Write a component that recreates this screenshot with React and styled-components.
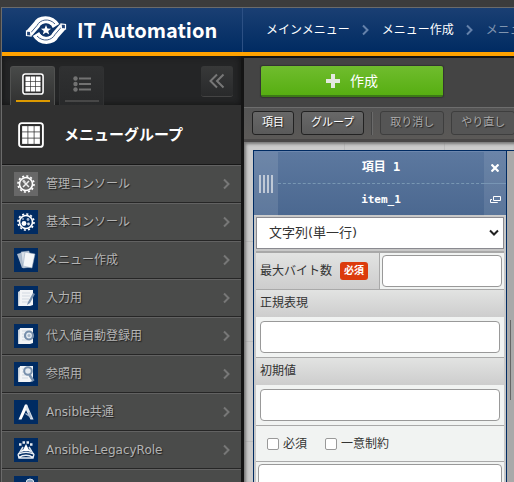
import React from "react";
import styled, { createGlobalStyle, css } from "styled-components";

const GlobalStyle = createGlobalStyle`
  * { box-sizing: border-box; }
  body {
    margin: 0;
    background: #3c3c3c;
    color: #333;
    font: 12px/20px "DejaVu Sans", "Noto Sans CJK JP", sans-serif;
    overflow: hidden;
  }
  button, input, select { font: inherit; margin: 0; }
  svg { display: block; flex: none; }
`;

const Frame = styled.div`
  margin: 7px 0 0 1px;
  height: calc(100vh - 7px);
  border: solid #6b6b6b;
  border-width: 1px 0 0 1px;
  display: flex;
  flex-direction: column;
  overflow: hidden;
`;

const Header = styled.header`
  flex: none;
  height: 48px;
  display: flex;
  background: linear-gradient(#1a3f73, #002b62);
  border-bottom: 4px solid #ffa200;
  color: #fff;
  white-space: nowrap;
`;

const Brand = styled.a`
  flex: none;
  width: 241px;
  padding-left: 22px;
  display: flex;
  align-items: center;
  gap: 9px;
  border-right: 1px solid #2c5084;
  color: #fff;
  text-decoration: none;
  font: 700 20px/40px "Noto Sans CJK JP", sans-serif;
`;

const Breadcrumb = styled.nav`
  display: flex;
  align-items: center;
  gap: 11px;
  padding-left: 23px;
  overflow: hidden;
  color: #6582ab;
`;

const Crumb = styled.a`
  flex: none;
  color: ${(p) => (p.$current ? "#8095b0" : "#fff")};
  text-decoration: none;
`;

const Columns = styled.div`
  flex: 1;
  min-height: 0;
  display: flex;
`;

const Sidebar = styled.aside`
  flex: none;
  width: 242px;
  border-right: 3px solid #141414;
  background: #4a4b4a;
  overflow: hidden;
`;

const TabBar = styled.div`
  height: 49px;
  padding: 10px 8px 0;
  display: flex;
  gap: 4px;
  background: #242526;
  box-shadow: inset 0 0 6px #111;
`;

const Tab = styled.button`
  width: 45px;
  height: 39px;
  padding: 0 4px 3px;
  display: flex;
  flex-direction: column;
  align-items: center;
  justify-content: space-between;
  border: 1px solid ${(p) => (p.$active ? "#505150" : "#303132")};
  border-bottom: 0;
  border-radius: 3px 3px 0 0;
  background: ${(p) => (p.$active ? "linear-gradient(#484a49, #303030)" : "linear-gradient(#303132, #28292a)")};
  color: ${(p) => (p.$active ? "#fff" : "#727272")};

  &::after {
    content: "";
    width: 34px;
    height: 2px;
    background: ${(p) => (p.$active ? "#dc9900" : "#474747")};
  }
`;

const TabIcon = styled.span`
  height: 33px;
  display: flex;
  align-items: center;
`;

const Collapse = styled.button`
  width: 32px;
  height: 31px;
  margin-left: auto;
  padding: 0;
  display: grid;
  place-items: center;
  border: 0;
  border-bottom: 1px solid #444;
  border-radius: 3px;
  background: linear-gradient(#383939, #292a2b);
  color: #777;
`;

const GroupTitle = styled.h2`
  height: 60px;
  margin: 0;
  padding: 0 16px;
  display: flex;
  align-items: center;
  gap: 20px;
  border-bottom: 1px solid #181818;
  background: #303030;
  color: #fff;
  font-size: 15px;
  font-weight: 700;
`;

const MenuList = styled.ul`
  margin: 0;
  padding: 0;
  list-style: none;
`;

const MenuLink = styled.a`
  height: 38px;
  padding: 0 9px 0 12px;
  display: flex;
  align-items: center;
  gap: 8px;
  border-top: 1px solid #626262;
  border-bottom: 1px solid #262626;
  color: #b4b4b4;
  text-decoration: none;
  text-shadow: 1px 1px 1px #222;
  white-space: nowrap;

  & > svg:last-child { margin-left: auto; color: #777; }
`;

const Main = styled.main`
  flex: 1;
  min-width: 0;
  display: flex;
  flex-direction: column;
  border-top: 2px solid #141414;
`;

const ActionBar = styled.div`
  flex: none;
  height: 49px;
  padding: 8px 17px;
  background: #444;
`;

const CreateButton = styled.button`
  width: 182px;
  height: 31px;
  padding: 0;
  display: flex;
  align-items: center;
  justify-content: center;
  gap: 10px;
  border: 0;
  border-bottom: 2px solid #3c7a16;
  border-radius: 2px;
  background: linear-gradient(#70bd2e, #57ae12);
  box-shadow: 0 0 1px 1px #333;
  color: #fff;
  font-size: 14px;
`;

const ToolBar = styled.div`
  flex: none;
  height: 35px;
  padding: 3px 8px;
  display: flex;
  gap: 7px;
  border-top: 1px solid #6d6d6d;
  border-bottom: 3px solid #494747;
  background: linear-gradient(#555, #5b5957);
  overflow: hidden;
`;

const Tool = styled.button`
  flex: none;
  height: 24px;
  padding: 0 9px;
  border: 1px solid #222;
  border-radius: 3px;
  background: linear-gradient(#686868, #5a5a5a);
  color: #fff;
  font-size: 11px;
  line-height: 20px;
  text-shadow: 1px 1px 1px #222;
  white-space: nowrap;

  &:disabled {
    border-color: #3e3e3e;
    background: #555;
    color: #aaa;
  }
`;

const Separator = styled.span`
  flex: none;
  width: 2px;
  margin: 1px 0;
  background: #444;
  border-right: 1px solid #6a6a6a;
`;

const Canvas = styled.section`
  flex: 1;
  min-height: 0;
  padding: 8px 0 0 9px;
  display: flex;
  align-items: stretch;
  background:
    linear-gradient(90deg, #bbb 1px, transparent 1px) 0 0 / 100px 100px,
    linear-gradient(#bbb 1px, transparent 1px) 0 -1px / 100px 100px,
    #cacaca;
  box-shadow: inset 2px 2px 3px #777;
`;

const ItemCard = styled.article`
  flex: none;
  width: 254px;
  border: 1px solid #002b62;
  border-bottom: 0;
  background: #c8c8c8;
  overflow: hidden;
`;

const Beyond = styled.div`
  flex: 1;
  padding: 169px 0 0 3px;
  border-top: 1px solid #002b62;
  background: #a9a9a9;
`;

const ScrollThumb = styled.div`
  width: 1px;
  height: 80px;
  background: #666;
`;

const CardHead = styled.div`
  display: grid;
  grid-template-columns: 24px 1fr 22px;
  height: 64px;
  border-top: 1px solid #6d87ad;
  background: linear-gradient(#5c789f, #4b6890);
  color: #fff;
`;

const Handle = styled.div`
  display: flex;
  align-items: center;
  justify-content: center;
  gap: 2px;
  background: #ffffff1c;
`;

const Grip = styled.i`
  width: 2px;
  height: 18px;
  background: #bfc9d6;
`;

const Names = styled.div`
  display: grid;
  grid-template-rows: 1fr 1fr;
  text-align: center;
  font: 700 11px/31px "DejaVu Sans Mono", "Noto Sans CJK JP", monospace;
`;

const Name = styled.span`
  font-size: ${(p) => (p.$large ? 12 : 11)}px;
  border-bottom: ${(p) => (p.$large ? "1px dashed #7897b3" : "0")};
`;

const CardActions = styled.div`
  display: grid;
  grid-template-rows: 1fr 1fr;
  background: #ffffff18;
`;

const CardAction = styled.button`
  padding: 0;
  display: grid;
  place-items: center;
  border: 0;
  background: none;
  color: #fff;

  &:first-child { border-bottom: 1px solid #7895b4; }
`;

const TypeRow = styled.div`
  padding: 2px;
  display: grid;
  align-items: center;

  & > * { grid-area: 1 / 1; }
  & > svg { justify-self: end; margin-right: 5px; pointer-events: none; color: #222; }
`;

const TypeSelect = styled.select`
  width: 100%;
  height: 32px;
  padding: 0 12px;
  appearance: none;
  border: 1px solid #8a8a90;
  border-radius: 0;
  background: #fff;
  color: #333;
  font-size: 13px;
`;

const Settings = styled.div`
  margin: 0 2px;
  border-top: 2px solid #a8a8a8;
  background: #f1f3f2;
`;

const InlineField = styled.div`
  display: grid;
  grid-template-columns: 1fr 1fr;
  height: 37px;
  border-bottom: 1px solid #a9a9a9;
`;

const labelLook = css`
  padding: 0 4px;
  background: linear-gradient(#e2e3e2, #cdcdcd);
  white-space: nowrap;
`;

const InlineLabel = styled.label`
  ${labelLook}
  display: flex;
  align-items: center;
  gap: 8px;
  border-right: 1px solid #a9a9a9;
`;

const Required = styled.span`
  width: 28px;
  height: 18px;
  border-radius: 3px;
  background: #dc3b0c;
  color: #fff;
  font-size: 10px;
  font-weight: 700;
  line-height: 18px;
  text-align: center;
`;

const FieldLabel = styled.label`
  ${labelLook}
  display: block;
  height: 27px;
  line-height: 26px;
`;

const Field = styled.div`
  padding: ${(p) => (p.$tight ? "2px" : "4px")};
  border-bottom: ${(p) => (p.$tight ? "0" : "1px solid #a9a9a9")};
`;

const TextInput = styled.input`
  display: block;
  width: 100%;
  height: 32px;
  padding: 0 6px;
  border: 1px solid #999;
  border-radius: 4px;
  background: #fff;
`;

const Checks = styled.div`
  height: 36px;
  padding: 0 11px;
  display: flex;
  align-items: center;
  gap: 18px;
  border-bottom: 1px solid #a9a9a9;
`;

const Check = styled.label`
  display: flex;
  align-items: center;
  gap: 4px;
`;

const CheckBox = styled.input`
  width: 12px;
  height: 12px;
  appearance: none;
  border: 1px solid #999;
  border-radius: 2px;
  background: #fff;

  &:checked { background: #1f66c1; }
`;

const Logo = () => (
  <svg width="44" height="30" viewBox="0 0 42 30" fill="none">
    {[0, 180].map((turn) => (
      <g key={turn} transform={`rotate(${turn} 21 15)`}>
        <path d="M4 18.500 11.500 10C14.500 3.500 26 2.500 31 11" stroke="#fff" strokeWidth="7.500" />
        <path d="M6 17.500 12 10.500C15 4.500 24 2.500 30 9" stroke="#2b4b7b" strokeWidth=".9" />
        <path d="m1.500 16 4 .5.500 4.500-4.500-.5z" fill="#24467a" stroke="#fff" strokeWidth="1.200" />
      </g>
    ))}
    <circle cx="21" cy="15" r="6.800" fill="#0f3469" />
    <path d="m21 10 1.400 3.500 3.700.2-2.900 2.300 1 3.600-3.200-2-3.200 2 1-3.600-2.900-2.300 3.700-.2z" fill="#fff" />
  </svg>
);

const GridIcon = ({ size }) => (
  <svg width={size} height={size} viewBox="0 0 24 24">
    <rect x="1" y="1" width="22" height="22" rx="2.500" fill="#303030" stroke="#fff" strokeWidth="1.700" />
    {[3.8, 9.5, 15.2].map((y) =>
      [3.8, 9.5, 15.2].map((x) => <rect key={`${x}-${y}`} x={x} y={y} width="5" height="5" fill="#fff" />)
    )}
  </svg>
);

const ListIcon = () => (
  <svg width="18" height="16" viewBox="0 0 18 16" fill="currentColor">
    {[2.5, 8, 13.5].map((y) => (
      <g key={y}>
        <circle cx="2.500" cy={y} r="2.200" />
        <path d={`M6 ${y - 1}h12v2H6z`} />
      </g>
    ))}
  </svg>
);

const Chevron = () => (
  <svg width="10" height="12" viewBox="0 0 10 12" fill="none" stroke="currentColor" strokeWidth="2">
    <path d="m2 1.500 4.500 4.500L2 10.500" />
  </svg>
);

const Cog = () => (
  <>
    <circle cx="12" cy="12" r="6.500" fill="none" stroke="#fff" strokeWidth="1.600" />
    <circle cx="12" cy="12" r="8" fill="none" stroke="#fff" strokeWidth="1.600" strokeDasharray="2.100 2.090" />
  </>
);

const Sheet = () => (
  <>
    <path d="m4 6 3-2v16H4z" fill="#c4ced9" />
    <path d="M6 4h13v15l-3 1H5z" fill="#f2f4f6" />
    <path d="M8 7h8M8 10h8M8 13h7M8 16h6" stroke="#d2d9e1" />
  </>
);

const glyphs = {
  admin: (
    <>
      <Cog />
      <path d="m9 15 6-6M10 10l5 5" stroke="#eee" strokeWidth="1.500" />
      <path d="m8 9 2-1.500L12 10l-2 1z" fill="#ddd" />
    </>
  ),
  basic: (
    <>
      <Cog />
      <circle cx="10" cy="13.500" r="2.400" fill="#fff" />
      <circle cx="14" cy="9.500" r="1.400" fill="#a8b8ce" />
      <circle cx="14.500" cy="14" r="1.400" fill="#d7dfe9" />
      <circle cx="9" cy="9" r="1" fill="#8ea4c0" />
    </>
  ),
  create: (
    <>
      <path d="m3 6 7-2 4 15-6 1z" fill="#aebccd" />
      <path d="m7 4 8-1 2 16-8 1z" fill="#d9e0e8" stroke="#8fa3bb" strokeWidth=".5" />
      <path d="m11 4 10 2-3 14-9-2z" fill="#f4f6f8" stroke="#8fa3bb" strokeWidth=".5" />
    </>
  ),
  input: (
    <>
      <Sheet />
      <path d="m19 7-5 9-1 3 3-2 5-9z" fill="#7890ac" />
    </>
  ),
  register: (
    <>
      <Sheet />
      <circle cx="15" cy="11.500" r="4" fill="#e4eaf0" stroke="#7890ac" strokeWidth="2.200" />
      <circle cx="15" cy="11.500" r="1.500" fill="#a5b5c8" />
    </>
  ),
  refer: (
    <>
      <Sheet />
      <circle cx="14" cy="9" r="3.800" fill="#e4eaf0" stroke="#7890ac" strokeWidth="2" />
      <path d="m15.500 13 4 6" stroke="#7890ac" strokeWidth="2.500" />
    </>
  ),
  ansible: (
    <>
      <path d="M4.500 19.500 11 4.500h2L14 8l-1.500 1L7.500 19.500z" fill="#fff" />
      <path d="m13 4.500 6.500 15h-3L11.500 9z" fill="#dfe6ee" />
      <path d="m15 12 1.500 5-5-3.500" fill="none" stroke="#a9b9cf" strokeWidth="1.300" />
    </>
  ),
  legacy: (
    <>
      <path d="M5 6.500h2.500M8.500 4.500h2.500M12.500 4.500H15M16 6.500h2.500" stroke="#e9eef4" strokeWidth="2.300" />
      <path d="m9 12 3-6 3 6z" fill="#fff" />
      <path d="m9 9-3 5 3-1.500M15 9l3 5-3-1.500" fill="none" stroke="#d9e1ea" strokeWidth="1.500" />
      <path d="M8 12.500h8" stroke="#fff" strokeWidth="1.500" />
      <path d="M4 16c5-2 11-2 16 0M5 19.500c4-3 10-3 14 0M4 16l1 4h14l1-4" fill="none" stroke="#e9eef4" strokeWidth="1.400" />
    </>
  ),
  more: (
    <>
      <path d="M4 9h10v12H4z" fill="#eef1f5" />
      <circle cx="16" cy="7" r="4" fill="#8ca2bd" stroke="#dde4ec" />
    </>
  ),
};

const MenuIcon = ({ name }) => (
  <svg width="24" height="24" viewBox="0 0 24 24">
    <rect width="24" height="24" fill={name === "admin" ? "#686868" : "#002b62"} />
    {glyphs[name]}
  </svg>
);

const menu = [
  ["admin", "管理コンソール"],
  ["basic", "基本コンソール"],
  ["create", "メニュー作成"],
  ["input", "入力用"],
  ["register", "代入値自動登録用"],
  ["refer", "参照用"],
  ["ansible", "Ansible共通"],
  ["legacy", "Ansible-LegacyRole"],
  ["more", ""],
];

export default function App() {
  return (
    <>
      <GlobalStyle />
      <Frame>
        <Header>
          <Brand href="#"><Logo />IT Automation</Brand>
          <Breadcrumb>
            <Crumb href="#">メインメニュー</Crumb>
            <Chevron />
            <Crumb href="#">メニュー作成</Crumb>
            <Chevron />
            <Crumb href="#" $current>メニュー</Crumb>
          </Breadcrumb>
        </Header>
        <Columns>
          <Sidebar>
            <TabBar>
              <Tab $active aria-label="Menu groups"><TabIcon><GridIcon size={22} /></TabIcon></Tab>
              <Tab aria-label="Menu list"><TabIcon><ListIcon /></TabIcon></Tab>
              <Collapse aria-label="Collapse">
                <svg width="16" height="16" viewBox="0 0 16 16" fill="none" stroke="currentColor" strokeWidth="2">
                  <path d="M8 1.500 1.500 8 8 14.500M14.500 1.500 8 8l6.500 6.500" />
                </svg>
              </Collapse>
            </TabBar>
            <GroupTitle><GridIcon size={26} />メニューグループ</GroupTitle>
            <MenuList>
              {menu.map(([icon, label]) => (
                <li key={icon}>
                  <MenuLink href="#"><MenuIcon name={icon} />{label}<Chevron /></MenuLink>
                </li>
              ))}
            </MenuList>
          </Sidebar>
          <Main>
            <ActionBar>
              <CreateButton>
                <svg width="14" height="14" viewBox="0 0 14 14" fill="#e4e9df">
                  <path d="M5 0h4v5h5v4H9v5H5V9H0V5h5z" />
                </svg>
                作成
              </CreateButton>
            </ActionBar>
            <ToolBar>
              <Tool>項目</Tool>
              <Tool>グループ</Tool>
              <Separator />
              <Tool disabled>取り消し</Tool>
              <Tool disabled>やり直し</Tool>
            </ToolBar>
            <Canvas>
              <ItemCard>
                <CardHead>
                  <Handle><Grip /><Grip /><Grip /><Grip /></Handle>
                  <Names>
                    <Name $large>項目 1</Name>
                    <Name>item_1</Name>
                  </Names>
                  <CardActions>
                    <CardAction aria-label="Delete">
                      <svg width="8" height="8" viewBox="0 0 8 8" stroke="currentColor" strokeWidth="2.200">
                        <path d="m.5.5 7 7M7.500.5l-7 7" />
                      </svg>
                    </CardAction>
                    <CardAction aria-label="Duplicate">
                      <svg width="11" height="8" viewBox="0 0 11 8" fill="none" stroke="currentColor">
                        <path d="M3.500.5h7v4h-7zM2 3.500H.5v3h7V6" />
                      </svg>
                    </CardAction>
                  </CardActions>
                </CardHead>
                <TypeRow>
                  <TypeSelect aria-label="Type"><option>文字列(単一行)</option></TypeSelect>
                  <svg width="10" height="8" viewBox="0 0 10 8" fill="none" stroke="currentColor" strokeWidth="2">
                    <path d="m1 1.500 4 4 4-4" />
                  </svg>
                </TypeRow>
                <Settings>
                  <InlineField>
                    <InlineLabel htmlFor="max">最大バイト数<Required>必須</Required></InlineLabel>
                    <Field $tight><TextInput id="max" /></Field>
                  </InlineField>
                  <FieldLabel htmlFor="regex">正規表現</FieldLabel>
                  <Field><TextInput id="regex" /></Field>
                  <FieldLabel htmlFor="initial">初期値</FieldLabel>
                  <Field><TextInput id="initial" /></Field>
                  <Checks>
                    <Check><CheckBox type="checkbox" />必須</Check>
                    <Check><CheckBox type="checkbox" />一意制約</Check>
                  </Checks>
                  <Field $tight><TextInput aria-label="Description" /></Field>
                </Settings>
              </ItemCard>
              <Beyond><ScrollThumb /></Beyond>
            </Canvas>
          </Main>
        </Columns>
      </Frame>
    </>
  );
}
